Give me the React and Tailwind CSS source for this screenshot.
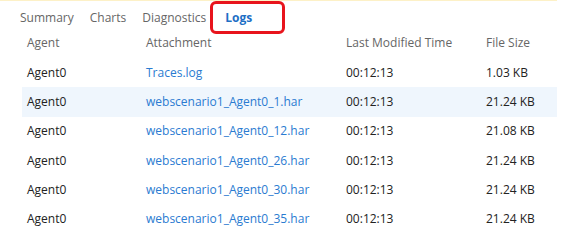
import React from 'react';

const rows = [
  { agent: 'Agent0', file: 'Traces.log', time: '00:12:13', size: '1.03 KB' },
  { agent: 'Agent0', file: 'webscenario1_Agent0_1.har', time: '00:12:13', size: '21.24 KB' },
  { agent: 'Agent0', file: 'webscenario1_Agent0_12.har', time: '00:12:13', size: '21.08 KB' },
  { agent: 'Agent0', file: 'webscenario1_Agent0_26.har', time: '00:12:13', size: '21.24 KB' },
  { agent: 'Agent0', file: 'webscenario1_Agent0_30.har', time: '00:12:13', size: '21.24 KB' },
  { agent: 'Agent0', file: 'webscenario1_Agent0_35.har', time: '00:12:13', size: '21.24 KB' },
];

const tabs = ['Summary', 'Charts', 'Diagnostics', 'Logs'];

const App = () => {
  return (
    <div className="w-[577px] h-[247px] bg-white overflow-hidden" style={{ fontFamily: '"Open Sans", "Noto Sans", sans-serif' }}>
      <div className="w-[557px] border-t border-[#fdf1c7]">
        {/* Tabs */}
        <div className="flex items-start h-[27px] pt-[8px] pl-[20px] text-[12px] leading-[18px] text-[#666]">
          {tabs.map((tab) => (
            <div key={tab} className={`relative mr-[16px] ${tab === 'Logs' ? 'ml-[3px] font-bold text-[#1e6fc5]' : ''}`}>
              {tab}
              {tab === 'Logs' && (
                <div className="absolute -left-[15px] -right-[33px] -top-[8px] h-[33px] border-[3px] border-[#e8141c] rounded-[6px]"></div>
              )}
            </div>
          ))}
        </div>

        {/* Table */}
        <div className="ml-[22px] text-[12px]">
          <div className="grid grid-cols-[119px_200px_140px_1fr] h-[30px] items-center text-[#666]">
            <div className="px-[5px]">Agent</div>
            <div className="px-[5px]">Attachment</div>
            <div className="px-[5px]">Last Modified Time</div>
            <div className="px-[5px]">File Size</div>
          </div>
          {rows.map((row, index) => (
            <div
              key={row.file}
              className={`grid grid-cols-[119px_200px_140px_1fr] h-[29.3px] items-center text-[#222] ${index === 1 ? 'bg-[#eff6fd]' : ''}`}
            >
              <div className="px-[5px]">{row.agent}</div>
              <div className="px-[5px] text-[#2a7bd1]">{row.file}</div>
              <div className="px-[5px]">{row.time}</div>
              <div className="px-[5px]">{row.size}</div>
            </div>
          ))}
        </div>
      </div>
    </div>
  );
};

export default App;
